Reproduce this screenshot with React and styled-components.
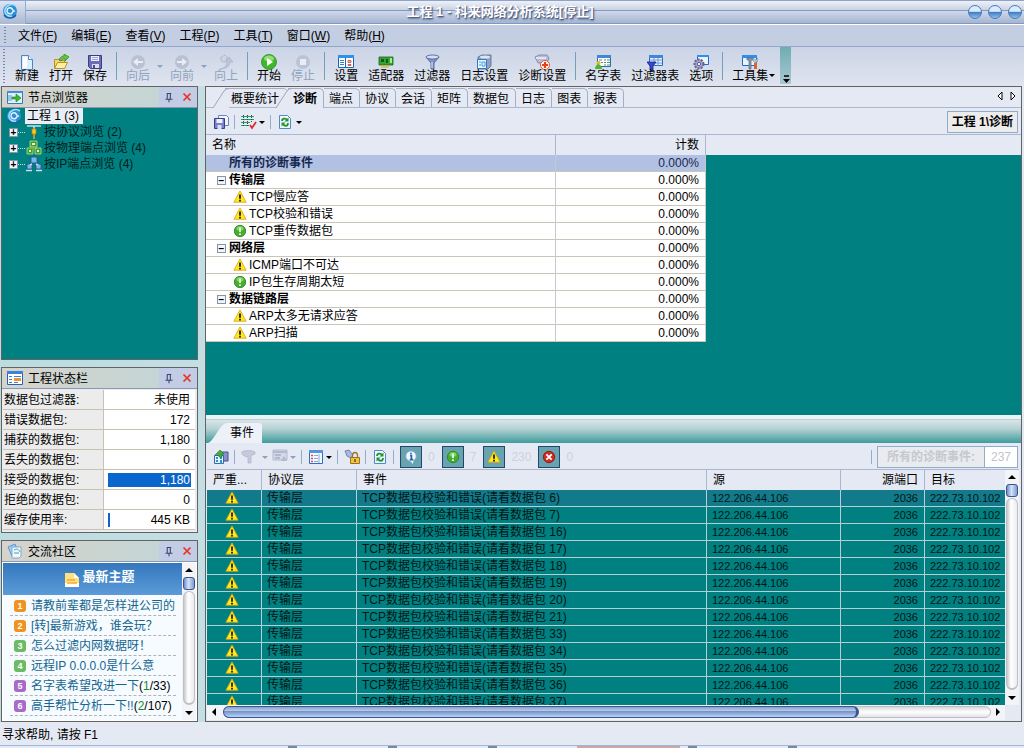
import React, { useState } from 'react';
import { styled, createGlobalStyle } from 'styled-components';

const TABS = [
  '概要统计',
  '诊断',
  '端点',
  '协议',
  '会话',
  '矩阵',
  '数据包',
  '日志',
  '图表',
  '报表',
];

const MENUS = [
  ['文件', 'F'],
  ['编辑', 'E'],
  ['查看', 'V'],
  ['工程', 'P'],
  ['工具', 'T'],
  ['窗口', 'W'],
  ['帮助', 'H'],
];

const TREE = [
  { icon: 'protocol', label: '按协议浏览 (2)' },
  { icon: 'physical', label: '按物理端点浏览 (4)' },
  { icon: 'hosts', label: '按IP端点浏览 (4)' },
];

const STATS = [
  { label: '数据包过滤器:', value: '未使用' },
  { label: '错误数据包:', value: '172' },
  { label: '捕获的数据包:', value: '1,180' },
  { label: '丢失的数据包:', value: '0' },
  { label: '接受的数据包:', value: '1,180', bar: 100 },
  { label: '拒绝的数据包:', value: '0' },
  { label: '缓存使用率:', value: '445 KB', bar: 3 },
];

const TOPICS = [
  { title: '请教前辈都是怎样进公司的', color: '#f0921e' },
  { title: '[转]最新游戏，谁会玩？', color: '#f0921e' },
  { title: '怎么过滤内网数据呀！', color: '#6cba62' },
  { title: '远程IP 0.0.0.0是什么意', color: '#6cba62' },
  { title: '名字表希望改进一下', color: '#a76cc8', page: '1', total: '33' },
  { title: '高手帮忙分析一下!!', color: '#a76cc8', page: '2', total: '107' },
];

const DIAGNOSES = [
  { label: '所有的诊断事件', kind: 'all' },
  { label: '传输层', kind: 'group' },
  { label: 'TCP慢应答', kind: 'warning' },
  { label: 'TCP校验和错误', kind: 'warning' },
  { label: 'TCP重传数据包', kind: 'notice' },
  { label: '网络层', kind: 'group' },
  { label: 'ICMP端口不可达', kind: 'warning' },
  { label: 'IP包生存周期太短', kind: 'notice' },
  { label: '数据链路层', kind: 'group' },
  { label: 'ARP太多无请求应答', kind: 'warning' },
  { label: 'ARP扫描', kind: 'warning' },
];

const PACKETS = [6, 7, 16, 17, 18, 19, 20, 21, 33, 34, 35, 36, 37];

const FILTERS = [
  { kind: 'info', name: '信息', count: 0 },
  { kind: 'notice', name: '注意', count: 7 },
  { kind: 'warning', name: '警告', count: 230 },
  { kind: 'error', name: '错误', count: 0 },
];

const ICONS = {
  logo: (
    <>
      <circle cx="8" cy="8" r="7" fill="#2f8fd6" />
      <path d="M14 3C10 0 4 2 3 7c-1 4 3 7 7 6" fill="none" stroke="#9fdcff" strokeWidth="1.6" />
      <path d="M11 8a3 3 0 1 1-2-3c2 1 2 4 4 3" fill="none" stroke="#e4f8ff" strokeWidth="1.4" />
      <path d="M2 12c3 4 9 4 12 0" fill="none" stroke="#1561a8" strokeWidth="1.4" />
    </>
  ),
  page: (
    <>
      <path d="M2.500 1.500h7l4 4v10h-11z" fill="#d9eeff" stroke="#4d86c0" />
      <path d="M9.500 1.500v4h4" fill="#fff" stroke="#4d86c0" />
      <path d="M4 3h4v11H4z" fill="#fff" />
    </>
  ),
  open: (
    <>
      <path d="M1.500 5.500h4l1 1h5v8h-10z" fill="#f5d868" stroke="#b8912c" />
      <path d="M1.500 14.500l3-6h10l-3 6z" fill="#fff0a0" stroke="#b8912c" />
      <path d="M6 6c1-3 3-4 5-4V0l5 3-4 4V5c-2 0-3 0-4 2z" fill="#5cc83e" stroke="#2c8424" strokeWidth=".7" />
    </>
  ),
  save: (
    <>
      <path d="M1.500 1.500h13v13h-11l-2-2z" fill="#6c6cb8" stroke="#3c3c84" />
      <path d="M4 2h8v5H4z" fill="#e8f2ff" />
      <path d="M5 3.500h6M5 5.500h6" stroke="#98a4cc" />
      <path d="M5 10h7v4H5z" fill="#d8dcec" />
      <path d="M6 11h2v3H6z" fill="#4c4c94" />
    </>
  ),
  back: (
    <>
      <circle cx="8" cy="8" r="7" fill="#b9c1d2" />
      <path d="M3 8l5-4v3h5v2H8v3z" fill="#e9edf6" />
    </>
  ),
  forward: (
    <>
      <circle cx="8" cy="8" r="7" fill="#b9c1d2" />
      <path d="M13 8L8 4v3H3v2h5v3z" fill="#e9edf6" />
    </>
  ),
  up: (
    <>
      <path d="M7 1l3 3-2 1 1 2-3 1-3-1 1-2-2-1z" fill="#cfd6e3" stroke="#a9b4c9" strokeWidth=".8" />
      <path d="M2 15c5-1 7-4 7-7H7l4-5 4 5h-3c0 4-4 7-10 7z" fill="#bcc5d6" stroke="#a9b4c9" strokeWidth=".7" />
    </>
  ),
  start: (
    <>
      <circle cx="8" cy="8" r="7.500" fill="#41b82c" stroke="#2a8a24" strokeWidth=".8" />
      <ellipse cx="8" cy="4.500" rx="5" ry="3" fill="#8fe070" />
      <path d="M6 4l6 4-6 4z" fill="#fff" />
    </>
  ),
  stop: (
    <>
      <circle cx="8" cy="8" r="7" fill="#bcc4d4" />
      <path d="M5 5h6v6H5z" fill="#e9edf5" />
    </>
  ),
  settings: (
    <>
      <path d="M.500 1.500h15v12H.500z" fill="#fff" stroke="#1d62bd" />
      <path d="M0 1h16v3H0z" fill="#3190e8" />
      <path d="M7.500 4v10" stroke="#1d62bd" />
      <path d="M2 6.500h4M2 8.500h4M2 10.500h4" stroke="#3282c8" />
      <path d="M10 6.500h3v2h-3zM10 10.500h3v1h-3z" fill="#f4caa6" stroke="#c04838" strokeWidth=".8" />
    </>
  ),
  adapter: (
    <>
      <path d="M1 3h14v8H1z" fill="#2fa536" stroke="#16661c" strokeWidth=".8" />
      <path d="M3 5h3v3H3zM8 5h2v4H8z" fill="#1c5420" />
      <path d="M12 4h2v5h-2z" fill="#a8f078" />
      <path d="M4 11v3M6 11v3M8 11v3M10 11v3" stroke="#d9b330" strokeWidth="1.200" />
    </>
  ),
  filter: (
    <>
      <path d="M2 3l5 6v6h3V9l5-6z" fill="#8195cc" stroke="#46588e" strokeWidth=".8" />
      <ellipse cx="8.500" cy="3" rx="6.500" ry="2" fill="#d3def7" stroke="#46588e" strokeWidth=".8" />
      <path d="M8 8v6" stroke="#e3ebff" />
    </>
  ),
  logbook: (
    <>
      <path d="M2 3l4-2h9v11l-3 3H2z" fill="#93a1bf" stroke="#5c6987" strokeWidth=".8" />
      <ellipse cx="9" cy="3" rx="5" ry="1.500" fill="#dce4f2" />
      <path d="M1.500 5.500h9v9h-9z" fill="#ecf6ff" stroke="#2c78cf" />
      <path d="M3 8h2M3 11h2M6 8h3v4H6z" fill="none" stroke="#3898dc" />
    </>
  ),
  medical: (
    <>
      <path d="M1 3l4-2h8l2 3-2 5H4z" fill="#b8bdd6" stroke="#767da4" strokeWidth=".8" />
      <path d="M2 4h10" stroke="#eef0fa" strokeWidth="1.500" />
      <circle cx="11" cy="11" r="4.500" fill="#fff" stroke="#e7502c" />
      <path d="M11 8v6M8 11h6" stroke="#e7401c" strokeWidth="2.200" />
    </>
  ),
  nametable: (
    <>
      <path d="M2.500 1.500h13v11h-13z" fill="#fff" stroke="#2d6db8" />
      <path d="M2 1h14v3H2z" fill="#3f87d8" />
      <path d="M4 6h3M9 6h2M12 6h3M6 8.500h2M9 8.500h2M12 8.500h3M9 11h2M12 11h3" stroke="#44986c" />
      <circle cx="3.500" cy="9" r="2" fill="#e7b436" />
      <path d="M0 15c0-6 7-6 7 0z" fill="#53b52e" />
    </>
  ),
  filtertable: (
    <>
      <path d="M2.500 1.500h13v10h-13z" fill="#e7f1ff" stroke="#2d6db8" />
      <path d="M2 1h14v3H2z" fill="#3f87d8" />
      <path d="M3 6h12M3 9h12M7 4v8M11 4v8" stroke="#6b9ad6" />
      <path d="M0 8h9l-3 4v4H3v-4z" fill="#3448d8" stroke="#16247c" strokeWidth=".8" />
    </>
  ),
  options: (
    <>
      <path d="M4.500 1.500h11v9h-11z" fill="#e9f4ff" stroke="#1c6dc4" />
      <path d="M4 1h12v2H4z" fill="#2c90ec" />
      <circle cx="6" cy="10" r="4.500" fill="#a6a3cd" stroke="#625f91" strokeDasharray="2 1.200" strokeWidth="2" />
      <circle cx="6" cy="10" r="1.700" fill="#f1f1ff" stroke="#625f91" />
    </>
  ),
  tools: (
    <>
      <path d="M.500 1.500h14v10H.500z" fill="#e9f4ff" stroke="#1c6dc4" />
      <path d="M0 1h15v3H0z" fill="#2c90ec" />
      <path d="M5 4h6l1 2H9v9H7V6H5z" fill="#8d9bad" stroke="#596577" strokeWidth=".7" />
      <path d="M12 9h3v6h-3z" fill="#dc6428" />
      <path d="M11 4v3l2 2 3-2V4l-2 2z" fill="#b8c0ca" stroke="#7a8694" strokeWidth=".5" />
    </>
  ),
  browse: (
    <>
      <path d="M.500 2.500h15v12H.500z" fill="#dff0ff" stroke="#3979bd" />
      <path d="M0 2h16v2H0z" fill="#3f90dc" />
      <path d="M2 6v6M4 6v6" stroke="#4b9cd0" />
      <path d="M5 8h4V5l5 4-5 4v-3H5z" fill="#3fb532" stroke="#217a1c" strokeWidth=".6" />
    </>
  ),
  form: (
    <>
      <path d="M.500 1.500h15v13H.500z" fill="#fff" stroke="#2464b4" />
      <path d="M0 1h16v3H0z" fill="#3a83d8" />
      <path d="M2 6.500h3M2 9.500h3M2 12.500h3M7 6.500h7M7 12.500h4" stroke="#3a83d8" />
      <path d="M7 8h7v3H7z" fill="#f09038" />
    </>
  ),
  forum: (
    <>
      <path d="M1 4l7-3 3 8-6 4z" fill="#9cd0f8" stroke="#4888c0" strokeWidth=".8" />
      <path d="M5 4h9v9l-2 2H5z" fill="#eef8ff" stroke="#62a0cf" strokeWidth=".8" />
      <path d="M7 7c4-2 5 0 6 2M7 10h5" fill="none" stroke="#48a0a8" />
    </>
  ),
  pin: (
    <path d="M5.500 4h5M6 4v6M9.500 4v6M4 10.500h8M8 11v3" fill="none" stroke="#39436b" strokeWidth="1.200" />
  ),
  close: <path d="M4 4l8 8M12 4l-8 8" stroke="#e83424" strokeWidth="2" />,
  protocol: (
    <>
      <path d="M1 2h14M8 2v3" stroke="#c8dce8" strokeWidth="1.500" />
      <path d="M6 5h4v5H6z" fill="#f8d028" stroke="#b87c10" strokeWidth=".8" />
      <path d="M8 10v5" stroke="#e8a818" strokeWidth="1.500" />
    </>
  ),
  physical: (
    <>
      <path d="M4 1h7v6H4zM1 8h6v6H1zM9 8h6v6H9z" fill="#3da034" stroke="#b8e488" strokeWidth=".8" />
      <path d="M6 3h3v2H6zM3 10h2v2H3zM11 10h2v2h-2z" fill="#e9f6c8" />
      <path d="M5 7h2v2M10 7v2" stroke="#e9cf38" />
    </>
  ),
  hosts: (
    <>
      <path d="M5 1h6v6H5zM1 8h5v5H1zM10 8h5v5h-5z" fill="#73b8ee" stroke="#244c82" strokeWidth=".8" />
      <path d="M6 8l-2 1M10 8l2 1M0 14.500h6M10 14.500h6" stroke="#d0deea" strokeWidth="1.500" />
    </>
  ),
  saveall: (
    <>
      <path d="M5.500 1.500h8l2 2v8h-10z" fill="#f2f6ff" stroke="#7280c0" />
      <path d="M1.500 4.500h10v10h-10z" fill="#7a80c8" stroke="#34408a" />
      <path d="M3.500 5h6v4h-6z" fill="#eef4ff" />
      <path d="M4.500 11h4v4h-4z" fill="#dce2f4" />
    </>
  ),
  checklist: (
    <>
      <path d="M0 2.500h13M0 5.500h13M0 8.500h9M0 11.500h8" stroke="#2d9a63" strokeWidth="1.200" />
      <path d="M2.500 1v12M6.500 1v12M10.500 1v8" stroke="#2a4a50" strokeDasharray="1 1" />
      <path d="M9 11l2 3 4-6" fill="none" stroke="#dc2a28" strokeWidth="1.800" />
    </>
  ),
  refresh: (
    <>
      <path d="M2.500 1.500h8l3 3v10h-11z" fill="#edf7ff" stroke="#5289c9" />
      <path d="M5 7c0-3 4-3 5-1M11 9c0 4-4 3-5 1" fill="none" stroke="#27932d" strokeWidth="1.800" />
      <path d="M11.500 3.500v4h-4zM4.500 12.500v-4h4z" fill="#27932d" />
    </>
  ),
  building: (
    <>
      <path d="M8 3h7v9H8z" fill="#8a90c9" stroke="#48508c" />
      <path d="M1.500 6.500h9v8h-9z" fill="#e9f4ff" stroke="#276dac" />
      <path d="M3 8h2v2H3zM7 8h2v2H7zM3 11h2v2H3zM7 11h2v4H7z" fill="#348dcc" />
      <path d="M2 6l5-5 4 4H9v3H6V5z" fill="#43b138" stroke="#22781f" strokeWidth=".6" />
    </>
  ),
  funneloff: (
    <path d="M1 3c2-2 10-2 13 0v2c-2 1-3 1-4 2v7H7V8C4 8 2 6 1 5z" fill="#c3cada" stroke="#aab4c8" strokeWidth=".7" />
  ),
  windowoff: (
    <>
      <path d="M1 1h14v10H1z" fill="#d3d9e6" stroke="#b1bace" />
      <path d="M1 3h14M3 6h6M3 9h5" stroke="#b1bace" strokeWidth="2" />
      <path d="M9 12l3-5 3 5z" fill="#b1bace" />
    </>
  ),
  columns: (
    <>
      <path d="M1.500 1.500h13v13h-13z" fill="#f4faff" stroke="#2f6cc0" />
      <path d="M1 1h14v3H1z" fill="#5792de" />
      <path d="M3 6.500h2M3 9.500h2M3 12.500h2" stroke="#d54b4b" strokeWidth="1.500" />
      <path d="M6 6.500h4M6 9.500h4M6 12.500h4M11 5v9" stroke="#8da6cd" />
    </>
  ),
  lock: (
    <>
      <path d="M1 2l4-1 4 5-2 3-4-2z" fill="#aab9df" stroke="#5d70a6" strokeWidth=".8" />
      <path d="M8.500 9V6.500c0-4 5-4 5 0V9" fill="none" stroke="#94762e" strokeWidth="1.300" />
      <path d="M6.500 8.500h9v6h-9z" fill="#f0c343" stroke="#9b721c" />
      <path d="M11 10v3" stroke="#725016" strokeWidth="1.500" />
    </>
  ),
  info: (
    <>
      <circle cx="8" cy="7" r="6" fill="#eef6ff" stroke="#81a8c8" />
      <path d="M7 12h4l-1 4z" fill="#eef6ff" />
      <path d="M8 3v2M7 6.500h1.500V11M6.500 11h4" fill="none" stroke="#1e62b0" strokeWidth="1.800" />
    </>
  ),
  notice: (
    <>
      <circle cx="8" cy="8" r="6.500" fill="#45ae2c" stroke="#2e8324" />
      <ellipse cx="8" cy="5" rx="4" ry="2.500" fill="#82d85e" />
      <path d="M8 4v5M8 10.500v2" stroke="#fff" strokeWidth="1.800" />
    </>
  ),
  warning: (
    <>
      <path d="M8 1L1 14h14z" fill="#ffe81c" stroke="#d9a010" strokeWidth=".9" strokeLinejoin="round" />
      <path d="M8 5v5M8 11v2" stroke="#1e1a08" strokeWidth="2" />
    </>
  ),
  error: (
    <>
      <circle cx="8" cy="8" r="6.500" fill="#d22a20" stroke="#8e1510" />
      <path d="M5 5l6 6M11 5l-6 6" stroke="#fff" strokeWidth="2.200" />
    </>
  ),
  note: (
    <>
      <path d="M1 1h9l5 5v9H1z" fill="#ffe07c" />
      <path d="M10 1v5h5" fill="#fff" />
      <path d="M1 11h14v4H1z" fill="#fff" />
      <path d="M3 8h8M3 11h10" stroke="#f3a934" strokeWidth="1.500" />
    </>
  ),
};

const Icon = ({ name, size = 16 }) => (
  <Svg width={size} height={size} viewBox="0 0 16 16" aria-hidden="true">
    {ICONS[name]}
  </Svg>
);

const ToolItem = ({ icon, label, disabled }) => (
  <ToolButton disabled={disabled}>
    <Icon name={icon} />
    {label}
  </ToolButton>
);

const Panel = ({ icon, title, grow, children }) => (
  <PanelBox $grow={grow}>
    <PanelHeader>
      <Icon name={icon} />
      <PanelTitle>{title}</PanelTitle>
      <PanelActions>
        <IconButton aria-label="自动隐藏">
          <Icon name="pin" size={14} />
        </IconButton>
        <IconButton aria-label="关闭">
          <Icon name="close" size={14} />
        </IconButton>
      </PanelActions>
    </PanelHeader>
    {children}
  </PanelBox>
);

const VerticalScroll = () => (
  <ScrollColumn>
    <Arrow $dir="up" />
    <ScrollThumb />
    <ScrollTrack />
    <Arrow $dir="down" />
  </ScrollColumn>
);

const App = () => {
  const [activeTab, setActiveTab] = useState('诊断');

  return (
    <>
      <GlobalStyle />
      <Window>
        <TitleBar>
          <LogoBox>
            <Icon name="logo" />
          </LogoBox>
          <Title>工程 1 - 科来网络分析系统[停止]</Title>
          <WindowButtons>
            <RoundButton aria-label="最小化" />
            <RoundButton aria-label="最大化" />
            <RoundButton aria-label="关闭窗口" />
          </WindowButtons>
        </TitleBar>

        <MenuBar>
          <Grip />
          {MENUS.map(([label, key]) => (
            <MenuButton key={key}>
              {label}(<u>{key}</u>)
            </MenuButton>
          ))}
        </MenuBar>

        <MainToolbar>
          <Grip />
          <ToolItem icon="page" label="新建" />
          <ToolItem icon="open" label="打开" />
          <ToolItem icon="save" label="保存" />
          <Separator />
          <ToolItem icon="back" label="向后" disabled />
          <DropArrow $muted />
          <ToolItem icon="forward" label="向前" disabled />
          <DropArrow $muted />
          <ToolItem icon="up" label="向上" disabled />
          <Separator />
          <ToolItem icon="start" label="开始" />
          <ToolItem icon="stop" label="停止" disabled />
          <Separator />
          <ToolItem icon="settings" label="设置" />
          <ToolItem icon="adapter" label="适配器" />
          <ToolItem icon="filter" label="过滤器" />
          <ToolItem icon="logbook" label="日志设置" />
          <ToolItem icon="medical" label="诊断设置" />
          <Separator />
          <ToolItem icon="nametable" label="名字表" />
          <ToolItem icon="filtertable" label="过滤器表" />
          <ToolItem icon="options" label="选项" />
          <Separator />
          <ToolItem icon="tools" label="工具集" />
          <LowArrow>
            <DropArrow />
          </LowArrow>
          <Overflow aria-label="更多按钮">
            <svg width="7" height="8" viewBox="0 0 7 8">
              <path d="M1 1h5" stroke="#000" strokeWidth="1.500" />
              <path d="M0 4h7L3.500 8z" />
            </svg>
          </Overflow>
        </MainToolbar>

        <Main>
          <Sidebar>
            <Panel icon="browse" title="节点浏览器" grow>
              <Tree>
                <RootNode>
                  <Icon name="logo" />
                  <RootLabel>工程 1 (3)</RootLabel>
                </RootNode>
                {TREE.map((node) => (
                  <TreeNode key={node.icon}>
                    <Toggle aria-label="展开">+</Toggle>
                    <Dots />
                    <Icon name={node.icon} />
                    <span>{node.label}</span>
                  </TreeNode>
                ))}
              </Tree>
            </Panel>

            <Panel icon="form" title="工程状态栏">
              <StatsTable>
                <tbody>
                  {STATS.map((row) => (
                    <tr key={row.label}>
                      <th scope="row">{row.label}</th>
                      <td>
                        <StatValue $full={row.bar === 100}>
                          {row.bar && <StatBar style={{ width: `${row.bar}%` }} />}
                          <span>{row.value}</span>
                        </StatValue>
                      </td>
                    </tr>
                  ))}
                </tbody>
              </StatsTable>
            </Panel>

            <Panel icon="forum" title="交流社区">
              <Forum>
                <ForumBody>
                  <ForumHeading>
                    <Icon name="note" />
                    最新主题
                  </ForumHeading>
                  <TopicList>
                    {TOPICS.map((topic, i) => (
                      <li key={topic.title}>
                        <Badge $color={topic.color}>{i + 1}</Badge>
                        <a href="#topic">
                          {topic.title}
                          {topic.page && (
                            <PageInfo>
                              (<b>{topic.page}</b>/{topic.total})
                            </PageInfo>
                          )}
                        </a>
                      </li>
                    ))}
                  </TopicList>
                </ForumBody>
                <VerticalScroll />
              </Forum>
            </Panel>
          </Sidebar>

          <Content>
            <TabBar role="tablist">
              {TABS.map((tab, i) => (
                <Tab
                  key={tab}
                  role="tab"
                  aria-selected={tab === activeTab}
                  $active={tab === activeTab}
                  $first={i === 0}
                  onClick={() => setActiveTab(tab)}
                >
                  {(i === 0 || tab === activeTab) && (
                    <Slope width="16" height="20" viewBox="0 0 16 20">
                      <path d="M0 20L11 3Q13 .500 16 .500V20z" fill="#e5e9f3" />
                      <path d="M0 20L11 3Q13 .500 16 .500" fill="none" stroke="#98a6be" />
                    </Slope>
                  )}
                  <TabText>{tab}</TabText>
                </Tab>
              ))}
              <TabScroll aria-label="滚动标签">
                <svg width="20" height="10" viewBox="0 0 20 10">
                  <path d="M5 1v8L1 5zM14 1v8l4-4z" fill="#fff" stroke="#000" />
                </svg>
              </TabScroll>
            </TabBar>

            <SubToolbar>
              <IconButton aria-label="保存">
                <Icon name="saveall" />
              </IconButton>
              <Divider />
              <IconButton aria-label="选择诊断">
                <Icon name="checklist" />
              </IconButton>
              <DropArrow $narrow />
              <Divider />
              <IconButton aria-label="刷新">
                <Icon name="refresh" />
              </IconButton>
              <DropArrow />
              <PathLabel>工程 1\诊断</PathLabel>
            </SubToolbar>

            <DiagnosisArea>
              <DiagnosisHead>
                <span>名称</span>
                <span>计数</span>
              </DiagnosisHead>
              <DiagnosisTable aria-label="诊断">
                <colgroup>
                  <col />
                  <col width="150" />
                </colgroup>
                <tbody>
                  {DIAGNOSES.map((row) => (
                    <DiagnosisRow key={row.label} $kind={row.kind}>
                      <td>
                        <NameCell $kind={row.kind}>
                          {row.kind === 'group' && <Toggle aria-label="折叠">−</Toggle>}
                          {(row.kind === 'warning' || row.kind === 'notice') && (
                            <Icon name={row.kind} size={14} />
                          )}
                          {row.label}
                        </NameCell>
                      </td>
                      <td>0.000%</td>
                    </DiagnosisRow>
                  ))}
                </tbody>
              </DiagnosisTable>
            </DiagnosisArea>

            <EventArea>
              <EventTabs>
                <EventTab role="tab" aria-selected="true">
                  <svg width="22" height="20" viewBox="0 0 22 20" aria-hidden="true">
                    <path d="M2 20C7 19 13 4 18 1Q20 0 22 0V20z" fill="#eef1f7" />
                  </svg>
                  <span>事件</span>
                </EventTab>
              </EventTabs>
              <EventToolbar>
                <IconButton aria-label="导出">
                  <Icon name="building" />
                </IconButton>
                <Divider />
                <IconButton aria-label="过滤" disabled>
                  <Icon name="funneloff" />
                </IconButton>
                <DropArrow $muted $wide />
                <IconButton aria-label="定位" disabled>
                  <Icon name="windowoff" />
                </IconButton>
                <DropArrow $muted $narrow />
                <Divider />
                <IconButton aria-label="列">
                  <Icon name="columns" />
                </IconButton>
                <DropArrow $narrow />
                <Divider />
                <IconButton aria-label="锁定">
                  <Icon name="lock" />
                </IconButton>
                <Divider />
                <IconButton aria-label="刷新事件">
                  <Icon name="refresh" />
                </IconButton>
                <Divider />
                {FILTERS.map((f) => (
                  <FilterItem key={f.kind}>
                    <FilterButton aria-label={f.name} aria-pressed="true">
                      <Icon name={f.kind} size={14} />
                    </FilterButton>
                    <FilterCount>{f.count}</FilterCount>
                  </FilterItem>
                ))}
                <Summary>
                  <Divider />
                  <SummaryLabel>所有的诊断事件:</SummaryLabel>
                  <SummaryValue>237</SummaryValue>
                </Summary>
              </EventToolbar>

              <EventGrid>
                <EventClip>
                  <EventTable>
                    <colgroup>
                      <col width="55" />
                      <col width="95" />
                      <col width="350" />
                      <col width="134" />
                      <col width="84" />
                      <col />
                    </colgroup>
                    <thead>
                      <tr>
                        <th>严重...</th>
                        <th>协议层</th>
                        <th>事件</th>
                        <th>源</th>
                        <th>源端口</th>
                        <th>目标</th>
                      </tr>
                    </thead>
                    <tbody>
                      {PACKETS.map((n) => (
                        <tr key={n}>
                          <td>
                            <Icon name="warning" size={14} />
                          </td>
                          <td>传输层</td>
                          <td>TCP数据包校验和错误(请看数据包 {n})</td>
                          <td>122.206.44.106</td>
                          <td>2036</td>
                          <td>222.73.10.102</td>
                        </tr>
                      ))}
                    </tbody>
                  </EventTable>
                </EventClip>
                <VerticalScroll />
              </EventGrid>
              <HorizontalScroll>
                <Arrow $dir="left" />
                <HorizontalTrack>
                  <HorizontalThumb />
                </HorizontalTrack>
                <Arrow $dir="right" />
              </HorizontalScroll>
            </EventArea>
          </Content>
        </Main>

        <StatusBar>寻求帮助, 请按 F1</StatusBar>
        <BottomEdge />
      </Window>
    </>
  );
};

export default App;

const GlobalStyle = createGlobalStyle`
  * {
    box-sizing: border-box;
  }

  body {
    margin: 0;
    font-family: 'Liberation Sans', 'Noto Sans CJK SC', sans-serif;
    font-size: 12px;
    line-height: 16px;
    color: #000;
    overflow: hidden;
  }

  button {
    font: inherit;
    color: inherit;
    background: none;
    border: none;
    padding: 0;
    margin: 0;
    white-space: nowrap;
  }

  table {
    border-collapse: separate;
    border-spacing: 0;
    table-layout: fixed;
    width: 100%;
  }

  th {
    font-weight: 400;
  }

  td, th {
    padding: 0;
    white-space: nowrap;
    overflow: hidden;
  }
`;

const Svg = styled.svg`
  display: block;
  flex: none;
`;

const Window = styled.div`
  height: 100vh;
  display: flex;
  flex-direction: column;
  background: linear-gradient(90deg, #bcdce0 0, #e4e8f2 100%);
`;

const TitleBar = styled.header`
  flex: none;
  height: 25px;
  display: flex;
  align-items: center;
  border-bottom: 1px solid #fff;
  background: linear-gradient(
    #8da3cc 0,
    #8da3cc 1px,
    #eef1f8 1px,
    #c9d2e4 10px,
    #8299c6 10px,
    #8299c6 11px,
    #d0d9ea 11px,
    #a5b5d1 23px,
    #7f97c2 23px
  );
`;

const LogoBox = styled.div`
  width: 26px;
  height: 23px;
  padding: 2px;
  border-right: 1px solid #97a9cc;
  background: linear-gradient(#dfe5f1, #a9b8d4);
`;

const Title = styled.h1`
  flex: 1;
  margin: 0;
  padding-left: 6px;
  font-size: 13px;
  font-weight: 700;
  text-align: center;
  color: #fff;
  text-shadow: 1px 1px 1px #4a5a80, 1px 2px 2px #6b7a9c;
`;

const WindowButtons = styled.div`
  display: flex;
  gap: 6px;
  padding-right: 2px;
`;

const RoundButton = styled.button`
  width: 14px;
  height: 14px;
  border: 1px solid #4c79b4;
  border-radius: 50%;
  background: linear-gradient(#d9ecff 45%, #3f78bd 50%, #8cc0f0);
`;

const MenuBar = styled.nav`
  flex: none;
  height: 22px;
  display: flex;
  align-items: center;
  gap: 14px;
  padding-left: 4px;
  background: #c4cee2;
  border-bottom: 1px solid #94a8cd;
`;

const MenuButton = styled.button`
  line-height: 20px;
`;

const Grip = styled.div`
  align-self: stretch;
  width: 2px;
  margin: 2px 0;
  margin-right: -2px;
  background: repeating-linear-gradient(#7386ae 0 1px, transparent 1px 3px);
`;

const MainToolbar = styled.div`
  flex: none;
  height: 39px;
  display: flex;
  align-items: flex-start;
  padding-left: 3px;
  background: linear-gradient(#cbd4e6, #dfe4ef);

  ${Grip} {
    margin-right: 5px;
  }
`;

const ToolButton = styled.button`
  display: flex;
  flex-direction: column;
  align-items: center;
  padding: 7px 5px 0;
  line-height: 13px;

  &:disabled {
    color: #8fa3bd;
  }
`;

const Separator = styled.div`
  width: 1px;
  height: 28px;
  margin: 5px 4px 0;
  background: #6fa1b8;
`;

const arrowWidth = ({ $narrow, $wide }) => {
  if ($narrow) return '7px';
  return $wide ? '13px' : '10px';
};

const DropArrow = styled.span`
  flex: none;
  align-self: center;
  width: ${arrowWidth};
  display: flex;
  justify-content: center;

  &::after {
    content: '';
    border: 3px solid transparent;
    border-bottom: none;
    border-top-color: ${({ $muted }) => ($muted ? '#8fa0bd' : '#000')};
  }
`;

const LowArrow = styled.div`
  height: 29px;
  margin-left: -6px;
  padding-top: 27px;
`;

const Overflow = styled.button`
  width: 11px;
  height: 37px;
  margin-left: 3px;
  padding: 24px 0 0 2px;
  background: linear-gradient(#6fadb0, #a9c8d4);
`;

const Main = styled.main`
  flex: 1;
  min-height: 0;
  display: flex;
  gap: 7px;
  padding: 0 2px 0 1px;
`;

const Sidebar = styled.aside`
  flex: none;
  width: 197px;
  display: flex;
  flex-direction: column;
  gap: 7px;
`;

const PanelBox = styled.section`
  flex: ${({ $grow }) => ($grow ? '1' : 'none')};
  min-height: 0;
  display: flex;
  flex-direction: column;
  border: 1px solid #636363;
  background: #fff;
`;

const PanelHeader = styled.header`
  flex: none;
  height: 21px;
  display: flex;
  align-items: center;
  padding-left: 5px;
  border-bottom: 1px solid #8b98ad;
  background: linear-gradient(90deg, #d6d3cb, #bfd6d7);
`;

const PanelTitle = styled.h2`
  flex: 1;
  margin: 0 0 0 5px;
  padding-top: 2px;
  font-size: 12px;
  font-weight: 400;
`;

const PanelActions = styled.div`
  height: 20px;
  display: flex;
  align-items: center;
  gap: 4px;
  padding: 0 3px;
  background: #c2cce4;
`;

const IconButton = styled.button`
  display: flex;
`;

const Tree = styled.div`
  flex: 1;
  background: #008080;
`;

const RootNode = styled.div`
  display: flex;
  align-items: center;
  height: 16px;
  padding-left: 4px;
  gap: 3px;
`;

const RootLabel = styled.span`
  padding: 0 4px 0 2px;
  background: #e9edf5;
`;

const TreeNode = styled.div`
  display: flex;
  align-items: center;
  height: 16px;
  padding-left: 7px;
  color: #001c1c;

  span {
    padding-left: 2px;
  }
`;

const Toggle = styled.button`
  flex: none;
  width: 9px;
  height: 9px;
  display: flex;
  align-items: center;
  justify-content: center;
  border: 1px solid #8295ae;
  background: #f4f5f8;
  color: #000;
  font-size: 10px;
  font-weight: 700;
  line-height: 7px;
`;

const Dots = styled.i`
  width: 7px;
  margin-right: 1px;
  border-top: 1px dotted #c3dcdc;
`;

const StatsTable = styled.table`
  border: solid #e8ecf0;
  border-width: 1px 2px 2px 1px;

  th,
  td {
    height: 20px;
    border-bottom: 1px solid #c9c2b4;
  }

  th {
    width: 101px;
    padding-left: 1px;
    text-align: left;
    background: #ececec;
    border-right: 1px solid #c9c2b4;
  }

  td {
    padding: 0 4px;
    text-align: right;
  }
`;

const StatValue = styled.div`
  position: relative;
  height: 14px;
  line-height: 14px;
  padding-right: 1px;
  color: ${({ $full }) => ($full ? '#fff' : '#000')};

  span {
    position: relative;
  }
`;

const StatBar = styled.div`
  position: absolute;
  left: 0;
  top: 0;
  height: 100%;
  background: #0a66cc;
`;

const Forum = styled.div`
  display: flex;
  padding: 1px;
`;

const ForumBody = styled.div`
  flex: 1;
  min-width: 0;
  height: 157px;
  overflow: hidden;
  background: #f6fbff;
`;

const ForumHeading = styled.h3`
  display: flex;
  align-items: center;
  justify-content: center;
  gap: 2px;
  height: 32px;
  margin: 0 0 1px;
  padding: 0 0 4px 14px;
  font-size: 13px;
  color: #fff;
  background: linear-gradient(#3377bd, #5c9bd8);

  svg {
    margin-top: 5px;
  }
`;

const TopicList = styled.ul`
  list-style: none;
  margin: 0 6px 0 7px;
  padding: 0;

  li {
    display: flex;
    align-items: center;
    gap: 5px;
    height: 20px;
    padding-left: 4px;
    border-bottom: 1px dashed #b3b3b3;
    white-space: nowrap;
  }

  a {
    color: #156690;
    text-decoration: none;
  }
`;

const Badge = styled.span`
  width: 12px;
  height: 12px;
  border-radius: 3px;
  background: ${({ $color }) => $color};
  color: #fff;
  font-size: 9px;
  font-weight: 700;
  line-height: 12px;
  text-align: center;
`;

const PageInfo = styled.span`
  color: #000;

  b {
    font-weight: 400;
    color: #1b8b1b;
  }
`;

const ScrollColumn = styled.div`
  flex: none;
  width: 14px;
  display: flex;
  flex-direction: column;
  background: #f3f4f8;
`;

const ARROWS = {
  up: 'border-bottom-color: #000; border-top: none;',
  down: 'border-top-color: #000; border-bottom: none;',
  left: 'border-right-color: #000; border-left: none;',
  right: 'border-left-color: #000; border-right: none;',
};

const Arrow = styled.div`
  flex: none;
  width: 14px;
  height: 14px;
  display: flex;
  align-items: center;
  justify-content: center;

  &::after {
    content: '';
    border: 4px solid transparent;
    ${({ $dir }) => ARROWS[$dir]}
  }
`;

const ScrollThumb = styled.div`
  height: 13px;
  margin: 0 1px;
  border: 1px solid #3a5590;
  border-radius: 3px;
  background: linear-gradient(90deg, #6f8fc8, #d5e2f7 45%, #7d9cd2);
`;

const ScrollTrack = styled.div`
  flex: 1;
  margin: 1px;
  border: 1px solid #bcbfc6;
  border-width: 1px 1px 2px;
  border-radius: 7px;
  background: linear-gradient(90deg, #c8c8cc, #fff 40%, #ececf0);
`;

const Content = styled.section`
  flex: 1;
  min-width: 0;
  display: flex;
  flex-direction: column;
  border: 1px solid #636363;
  background: #e5e9f3;
`;

const TabBar = styled.div`
  flex: none;
  height: 21px;
  display: flex;
  align-items: flex-end;
  padding-left: 19px;
  border-bottom: 1px solid #a9b7cf;
`;

const Tab = styled.button`
  position: relative;
  height: ${({ $active }) => ($active ? '20px' : '19px')};
  margin-bottom: ${({ $active }) => ($active ? '-1px' : '0')};
  padding: ${({ $first }) => ($first ? '1px 9px 0 6px' : '1px 6px 0 5px')};
  border: solid #a3afc5;
  border-width: ${({ $first }) => ($first ? '1px 0 0' : '1px 1px 0 0')};
  border-radius: 0 5px 0 0;
  background: #e5e9f3;
  font-weight: ${({ $active }) => ($active ? '700' : '400')};
`;

const TabText = styled.span`
  position: relative;
`;

const Slope = styled.svg`
  position: absolute;
  right: 100%;
  top: -1px;
  margin-right: -4px;
`;

const TabScroll = styled.button`
  align-self: center;
  margin-left: auto;
  margin-right: 4px;
  height: 18px;
`;

const SubToolbar = styled.div`
  flex: none;
  height: 27px;
  display: flex;
  align-items: center;
  gap: 1px;
  padding: 2px 3px 0 7px;
  border-bottom: 1px solid #a9b7cf;
`;

const Divider = styled.i`
  flex: none;
  width: 1px;
  height: 14px;
  margin: 0 5px 0 4px;
  background: #8fb0c8;
`;

const PathLabel = styled.div`
  margin-left: auto;
  padding: 0 4px;
  border: 1px solid #92abc8;
  background: #ececec;
  font-weight: 700;
  line-height: 20px;
`;

const DiagnosisArea = styled.div`
  flex: 1;
  min-height: 0;
  overflow: hidden;
  background: #008080;
`;

const DiagnosisHead = styled.div`
  display: flex;
  height: 20px;
  line-height: 20px;
  background: #e5e9f3;

  span:first-child {
    width: 350px;
    padding-left: 6px;
    border-right: 1px solid #a9b7cf;
  }

  span:last-child {
    width: 150px;
    padding-right: 6px;
    border-right: 1px solid #a9b7cf;
    text-align: right;
  }
`;

const DiagnosisTable = styled.table`
  width: 500px;
`;

const DiagnosisRow = styled.tr`
  background: ${({ $kind }) => ($kind === 'all' ? '#b1c1e4' : '#fff')};

  td {
    height: 17px;
    border-bottom: 1px solid #c9c5b9;
    border-right: 1px solid #c9c9c9;
  }

  td:last-child {
    padding-right: 6px;
    text-align: right;
    color: ${({ $kind }) => ($kind === 'all' ? '#17284c' : '#000')};
  }
`;

const INDENTS = { all: '23px', group: '11px', warning: '27px', notice: '27px' };

const NameCell = styled.div`
  display: flex;
  align-items: center;
  height: 16px;
  gap: ${({ $kind }) => ($kind === 'group' ? '3px' : '2px')};
  padding-left: ${({ $kind }) => INDENTS[$kind]};
  font-weight: ${({ $kind }) => ($kind === 'all' || $kind === 'group' ? '700' : '400')};
  color: ${({ $kind }) => ($kind === 'all' ? '#17284c' : '#000')};
`;

const EventArea = styled.div`
  flex: none;
  height: 306px;
  display: flex;
  flex-direction: column;
  padding: 0 2px 1px 1px;
`;

const EventTabs = styled.div`
  flex: none;
  height: 28px;
  display: flex;
  align-items: flex-end;
  border-top: 4px solid #e6f5f6;
  margin: 0 -2px 0 -1px;
  background: linear-gradient(#a9b5c4 0, #d9e5e8 1px, #b6d2d4 40%, #3e9c9c);
`;

const EventTab = styled.button`
  display: flex;
  height: 20px;
  line-height: 20px;

  span {
    padding: 0 8px 0 2px;
    background: #eef1f7;
    border-radius: 0 3px 0 0;
  }
`;

const EventToolbar = styled.div`
  flex: none;
  height: 27px;
  display: flex;
  align-items: center;
  gap: 1px;
  padding: 2px 1px 0 6px;
  border-bottom: 1px solid #a9b7cf;
`;

const FilterItem = styled.div`
  display: flex;
  align-items: center;
`;

const FilterButton = styled.button`
  display: flex;
  align-items: center;
  justify-content: center;
  width: 22px;
  height: 22px;
  border: 1px solid #24466a;
  background: #68a3b0;
`;

const FilterCount = styled.span`
  padding: 0 6px;
  color: #cdd2dc;
`;

const Summary = styled.div`
  display: flex;
  align-items: center;
  margin-left: auto;
`;

const SummaryLabel = styled.span`
  padding: 0 9px;
  border: 1px solid #92abc8;
  background: #e9ebee;
  color: #c5c9cf;
  font-weight: 700;
  line-height: 20px;
`;

const SummaryValue = styled.output`
  padding: 0 6px;
  border: 1px solid #92abc8;
  border-left: none;
  background: #fff;
  color: #c0c4ca;
  line-height: 20px;
`;

const EventGrid = styled.div`
  flex: 1;
  min-height: 0;
  display: flex;
`;

const EventClip = styled.div`
  flex: 1;
  min-width: 0;
  overflow: hidden;
`;

const EventTable = styled.table`
  th {
    height: 20px;
    padding-left: 6px;
    text-align: left;
    background: #e5e9f3;
    border-right: 1px solid #a9b7cf;
  }

  th:nth-child(5) {
    padding-right: 6px;
    text-align: right;
  }

  td {
    height: 17px;
    padding-left: 5px;
    background: #008080;
    border-right: 1px solid #b4cfd2;
    border-bottom: 1px solid #b4cfd2;
    color: #001616;
    line-height: 16px;
  }

  tbody tr:first-child td {
    background: #127a8a;
  }

  td:first-child {
    padding-left: 18px;
  }

  td:nth-child(n + 4) {
    font-size: 11px;
  }

  td:nth-child(5) {
    padding-right: 6px;
    text-align: right;
  }

  td:last-child,
  th:last-child {
    border-right: none;
  }
`;

const HorizontalScroll = styled.div`
  flex: none;
  height: 15px;
  display: flex;
  margin-right: 14px;
  background: #f3f4f8;
`;

const HorizontalTrack = styled.div`
  flex: 1;
  margin: 1px 0 2px 2px;
  border: 1px solid #bcbfc6;
  border-radius: 7px;
  background: linear-gradient(#d8d8dc, #fff 50%, #e4e4e8);
`;

const HorizontalThumb = styled.div`
  width: 83%;
  height: 12px;
  margin: -1px;
  border: 1px solid #3a5590;
  border-right-width: 3px;
  border-radius: 7px;
  background: linear-gradient(#8a9fce, #b4c7e8 35%, #6f8dc3 40%, #b9d3f4);
`;

const StatusBar = styled.footer`
  flex: none;
  height: 23px;
  padding-left: 2px;
  line-height: 26px;
  background: #e5e9f3;
`;

const BottomEdge = styled.div`
  flex: none;
  height: 3px;
  border-top: 1px solid #9fb6d6;
  background:
    linear-gradient(90deg, #e2ebf7 280px, transparent 280px 577px, #c9a9a6 577px 680px, transparent 680px 830px, #e2ebf7 830px),
    repeating-linear-gradient(90deg, #e2ebf7 0 88px, #7c8798 88px 97px, #e2ebf7 97px 100px);
`;
